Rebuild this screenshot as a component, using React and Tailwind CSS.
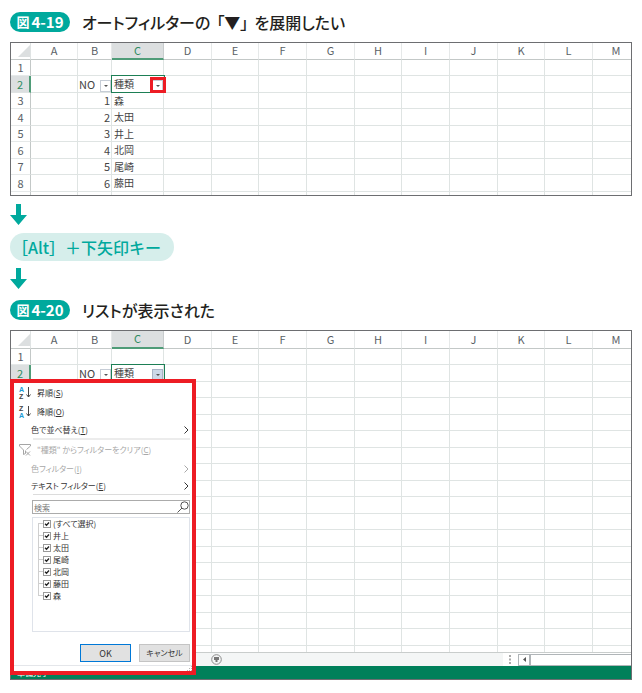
import React, { useState } from 'react';
import clsx from 'clsx';

const COLUMNS = [
    { name: 'A', width: 'w-[47px]' },
    { name: 'B', width: 'w-[34px]' },
    { name: 'C', width: 'w-[52px]' },
    { name: 'D', width: 'w-[48px]' },
    { name: 'E', width: 'w-[47px]' },
    { name: 'F', width: 'w-[48px]' },
    { name: 'G', width: 'w-[48px]' },
    { name: 'H', width: 'w-[47px]' },
    { name: 'I', width: 'w-[48px]' },
    { name: 'J', width: 'w-[48px]' },
    { name: 'K', width: 'w-[47px]' },
    { name: 'L', width: 'w-[48px]' },
    { name: 'M', width: '' },
];

const PEOPLE = ['森', '太田', '井上', '北岡', '尾崎', '藤田'];
const FILTER_VALUES = ['(すべて選択)', '井上', '太田', '尾崎', '北岡', '藤田', '森'];

const FigureTitle = ({ number, children }) => (
    <h2 className="flex h-5 items-center gap-3 text-[16px] leading-5 font-medium text-[#231f20]">
        <span className="flex h-5 w-[60px] items-center justify-center gap-[2px] rounded-full bg-[#00a99d] font-bold text-white">
            <span className="text-[13px]">図</span>
            <span className="text-[15px]">{number}</span>
        </span>
        <span className="whitespace-nowrap [font-feature-settings:'palt']">{children}</span>
    </h2>
);

const DownArrow = () => (
    <svg className="block h-[21px] w-[17px]" viewBox="0 0 17 21" fill="#00a99d" aria-hidden="true">
        <path d="M6 0h5v11h6L8.500 21 0 11h6z" />
    </svg>
);

const FilterButton = ({ label, open }) => (
    <button
        type="button"
        aria-label={label}
        className={clsx(
            'flex h-3 w-[11px] shrink-0 items-center justify-center self-end border',
            open ? 'border-[#a9b4c6] bg-[#ccd8e8]' : 'border-[#c6cdd6] bg-white'
        )}
    >
        <svg className="h-[2px] w-1" viewBox="0 0 4 2" fill="#555" aria-hidden="true">
            <path d="M0 0h4L2 2z" />
        </svg>
    </button>
);

const CellContent = ({ column, row, menuOpen }) => {
    if (row === 2 && column === 'B') {
        return (
            <div className="flex h-4 items-center justify-between pl-[1px]">
                NO
                <FilterButton label="NO フィルター" />
            </div>
        );
    }
    if (row === 2 && column === 'C') {
        return (
            <div className="relative -ml-px flex h-[18px] w-[54px] shrink-0 items-center justify-between border border-[#1d7f55] pr-px pl-[2px] text-[10px]">
                種類
                <FilterButton label="種類 フィルター" open={menuOpen} />
                {!menuOpen && <span className="absolute -right-[2px] -bottom-px size-4 border-3 border-[#ed1c24]" />}
            </div>
        );
    }
    if (menuOpen || row < 3) return null;
    if (column === 'B') return <div className="pr-[1px] text-right">{row - 2}</div>;
    if (column === 'C') return <div className="pl-[2px] text-[10px]">{PEOPLE[row - 3]}</div>;
    return null;
};

const Sheet = ({ rowCount, menuOpen }) => {
    const rows = Array.from({ length: rowCount }, (_, i) => i + 1);

    return (
        <table className="w-full table-fixed border-separate border-spacing-0 text-[11px] leading-none text-[#444]">
            <colgroup>
                <col className="w-[20px]" />
                {COLUMNS.map((c) => <col key={c.name} className={c.width} />)}
            </colgroup>
            <thead>
                <tr className={menuOpen ? 'h-[18px]' : 'h-[17px]'}>
                    <td className="border-r border-b border-r-[#dfe3e3] border-b-[#c3c8c7] p-0 align-bottom">
                        <svg className="mb-[2px] ml-auto block size-3" viewBox="0 0 12 12" fill="#dcdfe0" aria-hidden="true">
                            <path d="M12 0v12H0z" />
                        </svg>
                    </td>
                    {COLUMNS.map((c) => (
                        <th
                            key={c.name}
                            scope="col"
                            className={clsx(
                                'overflow-hidden border-r p-0 pb-px font-normal last:border-r-0 last:pl-2',
                                c.name === 'C'
                                    ? 'border-b-2 border-r-[#c8cccd] border-b-[#4f9c78] bg-[#dcdfe0] text-[#2f8c62]'
                                    : 'border-b border-r-[#e6e9e9] border-b-[#c3c8c7] text-[#5a5f66]'
                            )}
                        >
                            {c.name}
                        </th>
                    ))}
                </tr>
            </thead>
            <tbody>
                {rows.map((row) => (
                    <tr key={row} className="h-4 even:h-[17px]">
                        <th
                            scope="row"
                            className={clsx(
                                'border-b p-0 font-normal',
                                row === 2
                                    ? 'border-r-2 border-r-[#4f9c78] border-b-[#dfe3e3] bg-[#dcdfe0] text-[#2f8c62]'
                                    : 'border-r border-r-[#c3c8c7] border-b-[#e6e9e9] text-[#5a5f66]'
                            )}
                        >
                            {(!menuOpen || row < 3) && row}
                        </th>
                        {COLUMNS.map((c) => (
                            <td key={c.name} className="border-r border-b border-[#dfe4e3] p-0 whitespace-nowrap last:border-r-0">
                                <div className={clsx('flex flex-col justify-center', row % 2 ? 'h-[15px]' : 'h-4')}>
                                    <CellContent column={c.name} row={row} menuOpen={menuOpen} />
                                </div>
                            </td>
                        ))}
                    </tr>
                ))}
                <tr className={menuOpen ? 'h-[6px]' : 'h-[3px]'}>
                    <td className="border-r border-[#c3c8c7] p-0" />
                    {COLUMNS.map((c) => <td key={c.name} className="border-r border-[#dfe4e3] p-0 last:border-r-0" />)}
                </tr>
            </tbody>
        </table>
    );
};

const SortIcon = ({ top, bottom }) => (
    <span className="flex w-3 items-center gap-px font-['Liberation_Sans',sans-serif] text-[7px] leading-[7px] font-bold" aria-hidden="true">
        <span className="flex w-[6px] flex-col">
            <span className={top === 'A' ? 'text-[#1c9ad6]' : 'text-[#444]'}>{top}</span>
            <span className={bottom === 'A' ? 'text-[#1c9ad6]' : 'text-[#444]'}>{bottom}</span>
        </span>
        <svg className="h-[11px] w-[5px]" viewBox="0 0 5 11" fill="none" stroke="#444">
            <path d="M2.500 0v10M.5 7.500l2 2.500 2-2.500" />
        </svg>
    </span>
);

const ClearFilterIcon = () => (
    <svg className="h-3 w-3" viewBox="0 0 12 12" fill="none" stroke="#a5a5a5" aria-hidden="true">
        <path d="M.5.5h11v1.500L7.500 5.500M.5.500v1.500l4 4v4.500l2-1V6.500M7 7.500l4 4M11 7.500l-4 4" />
    </svg>
);

const Chevron = () => (
    <svg className="h-2 w-[5px]" viewBox="0 0 5 8" fill="none" stroke="currentColor" aria-hidden="true">
        <path d="M.5.500L4 4 .5 7.500" />
    </svg>
);

const MenuItem = ({ icon, label, accessKey, submenu, disabled, height }) => (
    <button
        type="button"
        disabled={disabled}
        className={clsx(
            'flex w-full items-center pr-[3px] text-left whitespace-nowrap',
            height,
            icon ? 'gap-[6px] pl-[5px]' : 'pl-[17px]',
            disabled ? 'text-[#a8a8a8]' : 'text-[#333]'
        )}
    >
        {icon}
        <span className="flex-1">
            {label}(<u>{accessKey}</u>)
        </span>
        {submenu && <Chevron />}
    </button>
);

const FilterValue = ({ label, first, last }) => {
    const [checked, setChecked] = useState(true);

    return (
        <li className="flex h-3 pl-[5px]">
            <span className="flex w-[5px] flex-col">
                <span className={clsx('h-[6px] border-b border-[#cfcfcf]', !first && 'border-l')} />
                <span className={clsx('h-[6px] border-[#cfcfcf]', !last && 'border-l')} />
            </span>
            <label className="flex items-center gap-[2px]">
                <span className="relative block size-2">
                    <input
                        type="checkbox"
                        checked={checked}
                        onChange={(e) => setChecked(e.target.checked)}
                        className="peer block size-2 appearance-none border border-[#9a9a9a] bg-white"
                    />
                    <svg className="pointer-events-none absolute inset-0 hidden size-2 peer-checked:block" viewBox="0 0 8 8" fill="none" stroke="#222" aria-hidden="true">
                        <path d="M2 3.800l1.500 1.500L6 2.500" strokeWidth="1.300" />
                    </svg>
                </span>
                {label}
            </label>
        </li>
    );
};

const FilterMenu = () => (
    <div className="absolute top-12 -left-px w-[186px] border-4 border-[#ed1c24] bg-white text-[8px] leading-none text-[#333] [font-feature-settings:'palt']">
        <MenuItem height="h-[19px]" icon={<SortIcon top="A" bottom="Z" />} label="昇順" accessKey="S" />
        <MenuItem height="h-[19px]" icon={<SortIcon top="Z" bottom="A" />} label="降順" accessKey="O" />
        <MenuItem height="h-[17px]" label="色で並べ替え" accessKey="T" submenu />
        <div className="mr-[2px] ml-[19px] h-[2px] bg-[#ececec]" />
        <MenuItem height="h-5" icon={<ClearFilterIcon />} label={'"種類" からフィルターをクリア'} accessKey="C" disabled />
        <MenuItem height="h-[17px]" label="色フィルター" accessKey="I" submenu disabled />
        <MenuItem height="h-[17px]" label="テキスト フィルター" accessKey="E" submenu />
        <div className="mr-[2px] ml-[19px] h-px bg-[#dcdcdc]" />

        <div className="mt-[5px] mr-[2px] ml-[18px]">
            <div className="flex h-[14px] items-center border border-[#ababab] pl-[1px]">
                <input type="text" aria-label="検索" placeholder="検索" className="h-3 min-w-0 flex-1 outline-none placeholder:text-[#777]" />
                <svg className="h-3 w-3" viewBox="0 0 12 12" fill="none" stroke="#555" aria-hidden="true">
                    <circle cx="7.500" cy="4.500" r="3.700" />
                    <path d="M5 7L.5 11.500" />
                </svg>
            </div>
            <ul className="mt-[3px] h-[115px] border border-[#dfe3ea]">
                {FILTER_VALUES.map((value, i) => (
                    <FilterValue key={value} label={value} first={i === 0} last={i === FILTER_VALUES.length - 1} />
                ))}
            </ul>
            <div className="mt-3 flex justify-end gap-2">
                <button type="button" className="h-[18px] w-[51px] border border-[#0078d7] bg-[#e1e1e1] text-[9px]">OK</button>
                <button type="button" className="h-[18px] w-[51px] border border-[#c4c4c4] bg-[#e1e1e1]">キャンセル</button>
            </div>
        </div>
        <div className="mt-[3px] flex h-[6px] items-end justify-end border-t border-[#e4e6ea]">
            <svg className="size-[5px]" viewBox="0 0 5 5" fill="#b5b5b5" aria-hidden="true">
                <path d="M4 0h1v1H4zM2 2h1v1H2zM4 2h1v1H4zM0 4h1v1H0zM2 4h1v1H2zM4 4h1v1H4z" />
            </svg>
        </div>
    </div>
);

const SheetFooter = () => (
    <>
        <div className="flex h-[14px] items-center border-t border-[#c9cdcc] bg-[#f4f6f6] pl-[200px]">
            <button type="button" aria-label="シート">
                <svg className="block size-[11px]" viewBox="0 0 11 11" fill="none" stroke="#8c8c8c" aria-hidden="true">
                    <circle cx="5.500" cy="5.500" r="4.800" />
                    <path d="M3 3h5v3H6.500v2h-2V6H3z" fill="#777" stroke="none" />
                </svg>
            </button>
            <div className="ml-auto flex h-full w-[128px] items-center bg-white pl-[6px]">
                <svg className="mr-[7px] h-[9px] w-[2px]" viewBox="0 0 2 9" fill="#aaa" aria-hidden="true">
                    <path d="M0 0h2v2H0zM0 3.500h2v2H0zM0 7h2v2H0z" />
                </svg>
                <button type="button" aria-label="左へスクロール" className="flex h-3 w-3 items-center justify-center border border-[#b0b5b8]">
                    <svg className="h-[5px] w-[3px]" viewBox="0 0 3 5" fill="#555" aria-hidden="true">
                        <path d="M3 0v5L0 2.500z" />
                    </svg>
                </button>
                <div className="h-3 flex-1 border-y border-l border-[#b0b5b8]" />
            </div>
        </div>
        <div className="h-[13px] bg-[#00805a] pl-[6px] text-[8px] leading-[13px] text-white">準備完了</div>
    </>
);

const App = () => (
    <main className="bg-white px-[10px] py-3 font-['Noto_Sans_CJK_JP',sans-serif]">
        <FigureTitle number="4-19">
            オートフィルターの<span className="mx-[6px]">「▼」</span>を展開したい
        </FigureTitle>
        <div className="mt-[10px] overflow-hidden border border-[#6d6e71]">
            <Sheet rowCount={8} />
        </div>

        <div className="mt-2">
            <DownArrow />
        </div>
        <p className="mt-2 flex h-7 w-[164px] items-center rounded-full bg-[#d6eeeb] pl-[2px] text-[16px] leading-none font-medium whitespace-nowrap text-[#00a99d]">
            ［Alt］＋下矢印キー
        </p>
        <div className="mt-[7px] mb-[11px]">
            <DownArrow />
        </div>

        <FigureTitle number="4-20">リストが表示された</FigureTitle>
        <div className="relative mt-[10px] border border-[#6d6e71]">
            <Sheet rowCount={18} menuOpen />
            <SheetFooter />
            <FilterMenu />
        </div>
    </main>
);

export default App;
